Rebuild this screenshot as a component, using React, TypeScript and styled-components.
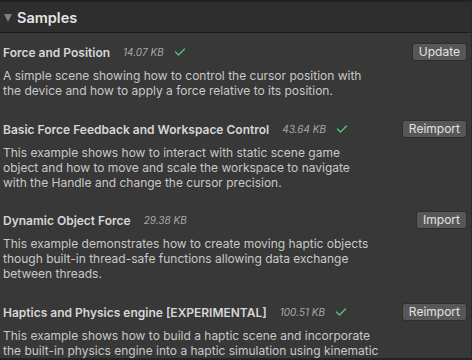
import React from "react";
import styled, { createGlobalStyle } from "styled-components";

const Global = createGlobalStyle`
  html, body { margin: 0; padding: 0; background: #383838; }
  body { font-family: Inter, "Noto Sans", sans-serif; -webkit-font-smoothing: antialiased; }
`;

const Frame = styled.div`
  width: 472px;
  height: 360px;
  box-sizing: border-box;
  overflow: hidden;
  background: #383838;
  border-top: 2px solid #232323;
  border-bottom: 2px solid #232323;
  border-right: 1px solid #2a2a2a;
  display: flex;
  flex-direction: column;
`;

const Header = styled.div`
  height: 30px;
  flex: none;
  background: #2e2e2e;
  border-bottom: 1px solid #1c1c1c;
  display: flex;
  align-items: center;
  gap: 5px;
  padding-left: 4px;
`;

const Triangle = styled.span`
  width: 0;
  height: 0;
  border-left: 4.5px solid transparent;
  border-right: 4.5px solid transparent;
  border-top: 8px solid #808080;
  margin-top: 1px;
`;

const HeaderTitle = styled.span`
  color: #e4e4e4;
  font-size: 14.5px;
  font-weight: 600;
`;

const List = styled.div`
  display: flex;
  flex-direction: column;
  padding: 10px 4px 0 3px;
`;

const Item = styled.div<{ $gap: number }>`
  display: flex;
  flex-direction: column;
  margin-bottom: ${(p) => p.$gap}px;
`;

const Row = styled.div`
  display: flex;
  align-items: center;
  height: 18px;
`;

const Title = styled.span`
  color: #d6d6d6;
  font-size: 12px;
  font-weight: 600;
`;

const Size = styled.span`
  color: #a8a8a8;
  font-size: 10px;
  font-style: italic;
  margin-left: 13px;
`;

const Check = styled.svg`
  margin-left: 10px;
  width: 12px;
  height: 10px;
`;

const Button = styled.button`
  margin-left: auto;
  height: 18px;
  padding: 0 6px;
  background: #575757;
  border: 1px solid #2e2e2e;
  border-radius: 3px;
  color: #e2e2e2;
  font-family: Inter, "Noto Sans", sans-serif;
  font-size: 12px;
  line-height: 16px;
  box-sizing: border-box;
`;

const Desc = styled.p`
  margin: 7px 0 0 0;
  color: #c8c8c8;
  font-size: 12px;
  line-height: 15px;
`;

const Line = styled.span`
  display: block;
  white-space: nowrap;
`;

type Sample = {
  title: string;
  size: string;
  imported: boolean;
  action: string;
  lines: string[];
  gap: number;
};

const samples: Sample[] = [
  {
    title: "Force and Position",
    size: "14.07 KB",
    imported: true,
    action: "Update",
    lines: [
      "A simple scene showing how to control the cursor position with",
      "the device and how to apply a force relative to its position.",
    ],
    gap: 22,
  },
  {
    title: "Basic Force Feedback and Workspace Control",
    size: "43.64 KB",
    imported: true,
    action: "Reimport",
    lines: [
      "This example shows how to interact with static scene game",
      "object and how to move and scale the workspace to navigate",
      "with the Handle and change the cursor precision.",
    ],
    gap: 21,
  },
  {
    title: "Dynamic Object Force",
    size: "29.38 KB",
    imported: false,
    action: "Import",
    lines: [
      "This example demonstrates how to create moving haptic objects",
      "though built-in thread-safe functions allowing data exchange",
      "between threads.",
    ],
    gap: 22,
  },
  {
    title: "Haptics and Physics engine [EXPERIMENTAL]",
    size: "100.51 KB",
    imported: true,
    action: "Reimport",
    lines: [
      "This example shows how to build a haptic scene and incorporate",
      "the built-in physics engine into a haptic simulation using kinematic",
      "objects.",
    ],
    gap: 20,
  },
];

const CheckIcon = () => (
  <Check viewBox="0 0 12 10">
    <path d="M1.5 5 L4.5 8 L10.5 2" fill="none" stroke="#4fc47c" strokeWidth="1.4" strokeLinecap="round" strokeLinejoin="round" />
  </Check>
);

export default function App() {
  return (
    <>
      <Global />
      <Frame>
        <Header>
          <Triangle />
          <HeaderTitle>Samples</HeaderTitle>
        </Header>
        <List>
          {samples.map((s) => (
            <Item key={s.title} $gap={s.gap}>
              <Row>
                <Title>{s.title}</Title>
                <Size>{s.size}</Size>
                {s.imported && <CheckIcon />}
                <Button>{s.action}</Button>
              </Row>
              <Desc>
                {s.lines.map((l) => (
                  <Line key={l}>{l}</Line>
                ))}
              </Desc>
            </Item>
          ))}
        </List>
      </Frame>
    </>
  );
}
